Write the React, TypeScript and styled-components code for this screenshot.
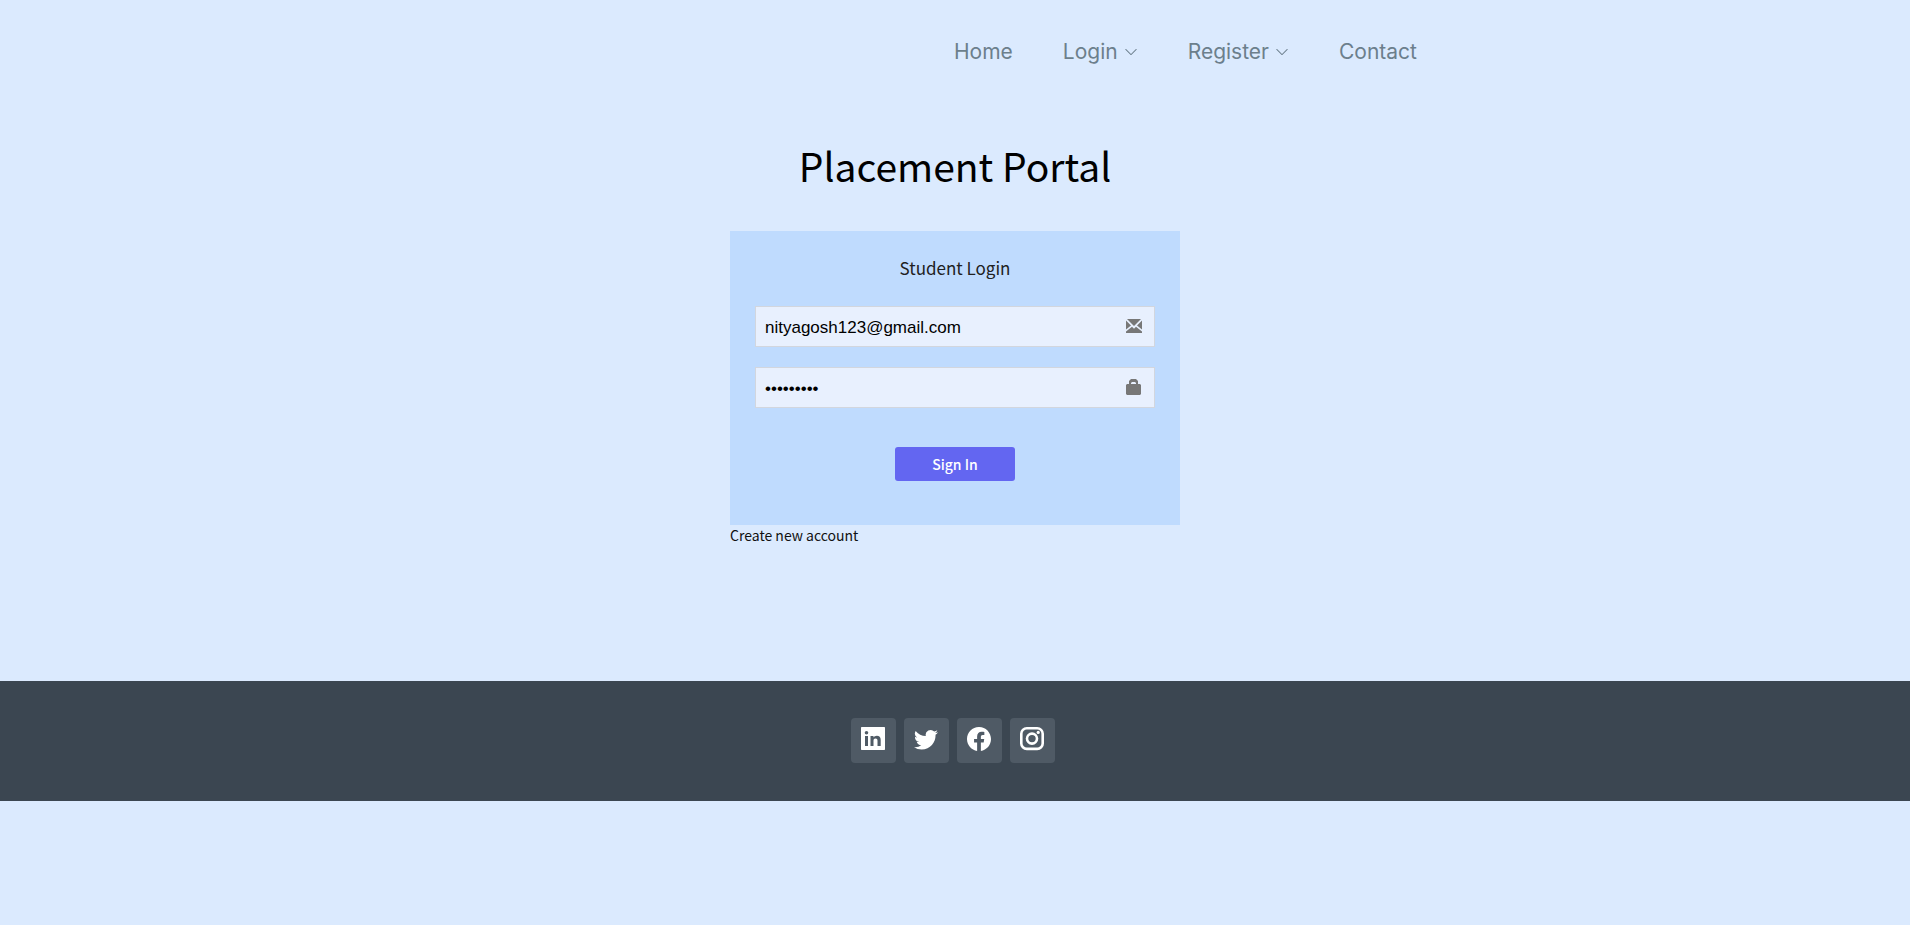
import React from "react";
import styled, { createGlobalStyle } from "styled-components";
import { BsTwitter, BsFacebook, BsChevronDown } from "react-icons/bs";

const GlobalStyle = createGlobalStyle`
  * { box-sizing: border-box; }
  body {
    margin: 0;
    background: #dbeafe;
    color: #212121;
    font: 14px/20px "Noto Sans CJK SC", sans-serif;
  }
`;

const Header = styled.header`
  display: flex;
  justify-content: flex-end;
  max-width: 956px;
  margin: 0 auto;
  padding: 32px 16px;
`;

const Nav = styled.nav`
  display: flex;
  flex-wrap: wrap;
  gap: 0 50px;
`;

const NavLink = styled.a`
  display: flex;
  align-items: center;
  gap: 6px;
  color: #6c7f8c;
  font: 21px/40px Inter, sans-serif;
  text-decoration: none;
  svg { width: 14px; height: 14px; }
`;

const Main = styled.main`
  display: flex;
  flex-direction: column;
  align-items: center;
  padding: 29px 16px 136px;
`;

const Title = styled.h1`
  margin: 0 0 34px;
  color: #000;
  font-size: 39px;
  line-height: 64px;
  font-weight: 400;
`;

const LoginBox = styled.section`
  width: 450px;
  max-width: 100%;
`;

const Card = styled.form`
  display: flex;
  flex-direction: column;
  align-items: center;
  padding: 25px 25px 44px;
  background: #bfdbfe;
`;

const CardTitle = styled.h2`
  margin: 0 0 26px;
  font-size: 17px;
  line-height: 24px;
  font-weight: 400;
`;

const Field = styled.label`
  display: flex;
  width: 100%;
  height: 41px;
  margin-bottom: 20px;
  padding: 0 12px 0 9px;
  border: 1px solid #d2d6de;
  background: #e8f0fe;
  color: #777;
  svg { flex: none; width: 16px; height: 16px; margin-top: 11px; }
`;

const Input = styled.input`
  flex: 1;
  min-width: 0;
  padding: 3px 0 0;
  border: 0;
  outline: 0;
  background: transparent;
  color: #000;
  font: 17px "Liberation Sans", sans-serif;
`;

const SignIn = styled.button`
  width: 120px;
  height: 34px;
  margin-top: 19px;
  padding: 0;
  border: 0;
  border-radius: 3px;
  background: #6366f1;
  color: #fff;
  font: 500 14px/34px "Noto Sans CJK SC", sans-serif;
  cursor: pointer;
`;

const CreateLink = styled.a`
  display: block;
  color: #111;
  text-decoration: none;
`;

const Footer = styled.footer`
  display: flex;
  justify-content: center;
  gap: 8px;
  padding: 37px 5px 38px 0;
  background: #3b4651;
`;

const SocialLink = styled.a`
  display: flex;
  justify-content: center;
  width: 45px;
  height: 45px;
  padding-top: 9px;
  border-radius: 4px;
  background: #4f5a65;
  color: #fff;
  svg { width: 24px; height: 24px; }
`;

const EnvelopeIcon = () => (
  <svg viewBox="0 0 16 16" fill="currentColor" aria-hidden="true">
    <path d="M1 1h14L8 8zM0 2.5L5 7.5 0 11.5zM16 2.5v9l-5-4zM0 15v-1.5L6 8.7l2 2 2-2 6 4.8V15z" />
  </svg>
);

const LockIcon = () => (
  <svg viewBox="0 0 16 16" fill="currentColor" aria-hidden="true">
    <path
      fillRule="evenodd"
      d="M3 5V2l2-2h5l2 2v3h2l1 1v9l-1 1H1l-1-1V6l1-1zM5 5h5V4L9 3H6L5 4z"
    />
  </svg>
);

const LinkedInIcon = () => (
  <svg viewBox="0 0 24 24" fill="currentColor" aria-hidden="true">
    <path
      fillRule="evenodd"
      d="M.7 0h22.6q.7 0 .7.7v21.6q0 .7-.7.7H.7q-.7 0-.7-.7V.7Q0 0 .7 0zM4 9v10h3V9zM5.500 4a1.800 1.800 0 1 0 0 3.600 1.800 1.800 0 0 0 0-3.600zM9.500 9v10h3v-5.200c0-1.400.6-2.300 2-2.300s2 .8 2 2.300V19h3.200v-6c0-2.800-1.500-4.200-3.800-4.200-1.500 0-2.700.7-3.400 1.800V9z"
    />
  </svg>
);

const InstagramIcon = () => (
  <svg viewBox="0 0 24 24" fill="none" stroke="currentColor" strokeWidth="2.6" aria-hidden="true">
    <rect x="1.3" y="1.3" width="21.4" height="20.6" rx="5.5" />
    <circle cx="12" cy="11.6" r="5" />
    <circle cx="18.200" cy="5.400" r="1.600" fill="currentColor" stroke="none" />
  </svg>
);

const navItems = [
  { label: "Home", menu: false },
  { label: "Login", menu: true },
  { label: "Register", menu: true },
  { label: "Contact", menu: false },
];

const socials = [
  { name: "LinkedIn", Icon: LinkedInIcon },
  { name: "Twitter", Icon: BsTwitter },
  { name: "Facebook", Icon: BsFacebook },
  { name: "Instagram", Icon: InstagramIcon },
];

export default function App() {
  return (
    <>
      <GlobalStyle />
      <Header>
        <Nav>
          {navItems.map(({ label, menu }) => (
            <NavLink href="#" key={label}>
              {label}
              {menu && <BsChevronDown />}
            </NavLink>
          ))}
        </Nav>
      </Header>
      <Main>
        <Title>Placement Portal</Title>
        <LoginBox>
          <Card onSubmit={(e) => e.preventDefault()}>
            <CardTitle>Student Login</CardTitle>
            <Field>
              <Input type="email" aria-label="Email" defaultValue="nityagosh123@gmail.com" />
              <EnvelopeIcon />
            </Field>
            <Field>
              <Input type="password" aria-label="Password" defaultValue="password1" />
              <LockIcon />
            </Field>
            <SignIn type="submit">Sign In</SignIn>
          </Card>
          <CreateLink href="#">Create new account</CreateLink>
        </LoginBox>
      </Main>
      <Footer>
        {socials.map(({ name, Icon }) => (
          <SocialLink href="#" aria-label={name} key={name}>
            <Icon />
          </SocialLink>
        ))}
      </Footer>
    </>
  );
}
